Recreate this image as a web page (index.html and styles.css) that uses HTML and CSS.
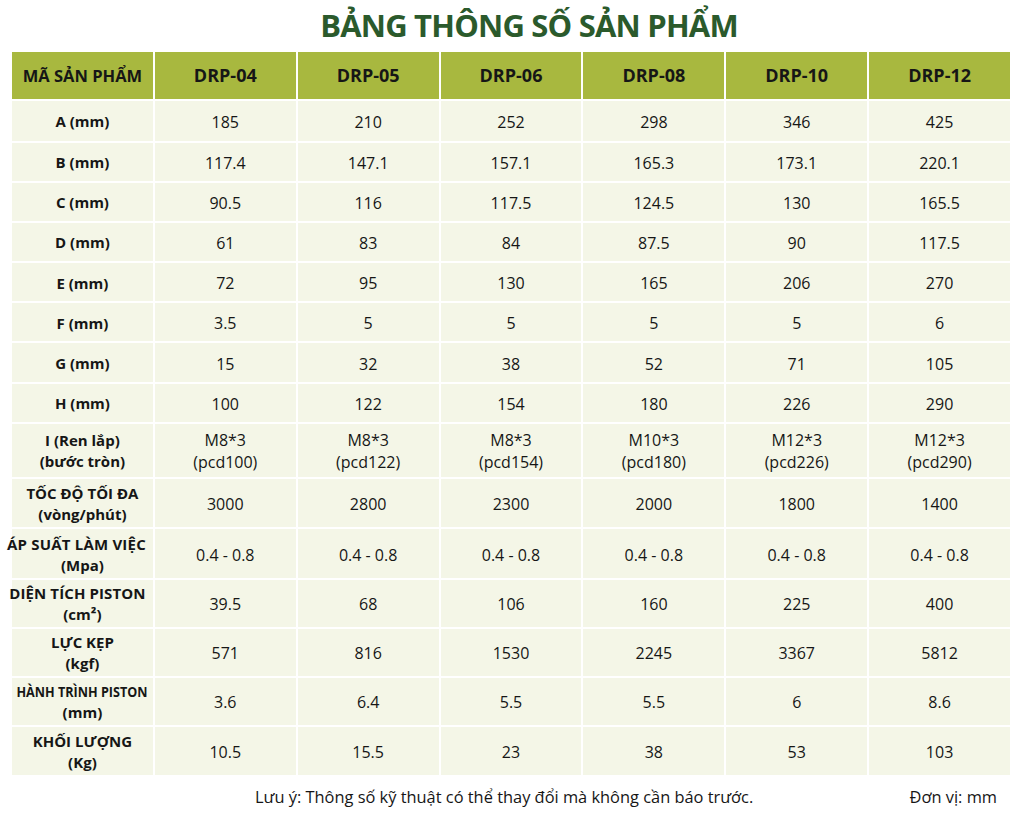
FILE: index.html
```html
<!DOCTYPE html>
<html lang="vi">
<head>
<meta charset="utf-8">
<title>Bảng thông số sản phẩm</title>
<link rel="stylesheet" href="styles.css">
</head>
<body>
<h1 class="title">BẢNG THÔNG SỐ SẢN PHẨM</h1>
<div class="table">
  <div class="cell head label">MÃ SẢN PHẨM</div>
  <div class="cell head">DRP-04</div>
  <div class="cell head">DRP-05</div>
  <div class="cell head">DRP-06</div>
  <div class="cell head">DRP-08</div>
  <div class="cell head">DRP-10</div>
  <div class="cell head">DRP-12</div>

  <div class="cell label">A (mm)</div>
  <div class="cell">185</div><div class="cell">210</div><div class="cell">252</div><div class="cell">298</div><div class="cell">346</div><div class="cell">425</div>

  <div class="cell label">B (mm)</div>
  <div class="cell">117.4</div><div class="cell">147.1</div><div class="cell">157.1</div><div class="cell">165.3</div><div class="cell">173.1</div><div class="cell">220.1</div>

  <div class="cell label">C (mm)</div>
  <div class="cell">90.5</div><div class="cell">116</div><div class="cell">117.5</div><div class="cell">124.5</div><div class="cell">130</div><div class="cell">165.5</div>

  <div class="cell label">D (mm)</div>
  <div class="cell">61</div><div class="cell">83</div><div class="cell">84</div><div class="cell">87.5</div><div class="cell">90</div><div class="cell">117.5</div>

  <div class="cell label">E (mm)</div>
  <div class="cell">72</div><div class="cell">95</div><div class="cell">130</div><div class="cell">165</div><div class="cell">206</div><div class="cell">270</div>

  <div class="cell label">F (mm)</div>
  <div class="cell">3.5</div><div class="cell">5</div><div class="cell">5</div><div class="cell">5</div><div class="cell">5</div><div class="cell">6</div>

  <div class="cell label">G (mm)</div>
  <div class="cell">15</div><div class="cell">32</div><div class="cell">38</div><div class="cell">52</div><div class="cell">71</div><div class="cell">105</div>

  <div class="cell label">H (mm)</div>
  <div class="cell">100</div><div class="cell">122</div><div class="cell">154</div><div class="cell">180</div><div class="cell">226</div><div class="cell">290</div>

  <div class="cell label">I (Ren lắp)<br>(bước tròn)</div>
  <div class="cell">M8*3<br>(pcd100)</div><div class="cell">M8*3<br>(pcd122)</div><div class="cell">M8*3<br>(pcd154)</div><div class="cell">M10*3<br>(pcd180)</div><div class="cell">M12*3<br>(pcd226)</div><div class="cell">M12*3<br>(pcd290)</div>

  <div class="cell label">TỐC ĐỘ TỐI ĐA<br>(vòng/phút)</div>
  <div class="cell">3000</div><div class="cell">2800</div><div class="cell">2300</div><div class="cell">2000</div><div class="cell">1800</div><div class="cell">1400</div>

  <div class="cell label"><span class="fit fit-a">ÁP SUẤT LÀM VIỆC</span>(Mpa)</div>
  <div class="cell">0.4 - 0.8</div><div class="cell">0.4 - 0.8</div><div class="cell">0.4 - 0.8</div><div class="cell">0.4 - 0.8</div><div class="cell">0.4 - 0.8</div><div class="cell">0.4 - 0.8</div>

  <div class="cell label"><span class="fit fit-d">DIỆN TÍCH PISTON</span>(cm²)</div>
  <div class="cell">39.5</div><div class="cell">68</div><div class="cell">106</div><div class="cell">160</div><div class="cell">225</div><div class="cell">400</div>

  <div class="cell label">LỰC KẸP<br>(kgf)</div>
  <div class="cell">571</div><div class="cell">816</div><div class="cell">1530</div><div class="cell">2245</div><div class="cell">3367</div><div class="cell">5812</div>

  <div class="cell label"><span class="fit fit-h">HÀNH TRÌNH PISTON</span>(mm)</div>
  <div class="cell">3.6</div><div class="cell">6.4</div><div class="cell">5.5</div><div class="cell">5.5</div><div class="cell">6</div><div class="cell">8.6</div>

  <div class="cell label">KHỐI LƯỢNG<br>(Kg)</div>
  <div class="cell">10.5</div><div class="cell">15.5</div><div class="cell">23</div><div class="cell">38</div><div class="cell">53</div><div class="cell">103</div>
</div>
<div class="footer">
  <span class="note">Lưu ý: Thông số kỹ thuật có thể thay đổi mà không cần báo trước.</span>
  <span class="unit">Đơn vị: mm</span>
</div>
</body>
</html>
```

FILE: styles.css
```css
html, body {
  margin: 0;
  padding: 0;
  background: #ffffff;
}

body {
  width: 1024px;
  height: 819px;
  overflow: hidden;
  font-family: "Open Sans", "Noto Sans", "Liberation Sans", sans-serif;
  color: #161616;
}

.title {
  margin: 0;
  height: 52px;
  display: flex;
  align-items: center;
  justify-content: center;
  padding-left: 34px;
  padding-bottom: 2px;
  box-sizing: border-box;
  font-size: 31px;
  font-weight: 700;
  color: #2b5a2c;
  letter-spacing: -0.8px;
}

.table {
  margin-left: 12px;
  width: 998px;
  display: grid;
  grid-template-columns: repeat(7, minmax(0, 1fr));
  grid-template-rows: 46.5px 40px repeat(7, 38.2px) 53px 48.5px 48.5px 47px 47px 47px 48.5px;
  gap: 2px;
}

.cell {
  background: #f4f6e7;
  display: flex;
  flex-direction: column;
  align-items: center;
  justify-content: center;
  text-align: center;
  font-size: 16px;
  line-height: 22px;
  padding-top: 2px;
  box-sizing: border-box;
  white-space: nowrap;
  min-width: 0;
}

.cell.label {
  font-size: 15px;
  font-weight: 700;
  line-height: 21px;
  letter-spacing: 0;
}

.cell.head {
  background: #a8b83f;
  font-size: 18px;
  font-weight: 700;
  padding-top: 0;
}

.cell.head.label {
  font-size: 16.5px;
}

.fit {
  display: inline-block;
}

.fit-a {
  letter-spacing: 0.2px;
  margin-right: 12px;
}

.fit-d {
  letter-spacing: 0.1px;
  margin-right: 10px;
}

.fit-h {
  transform: scaleX(0.84);
}

.footer {
  height: 42px;
  display: flex;
  align-items: center;
  padding-left: 255px;
  padding-right: 27px;
  font-size: 16.4px;
}

.unit {
  margin-left: auto;
}
```
